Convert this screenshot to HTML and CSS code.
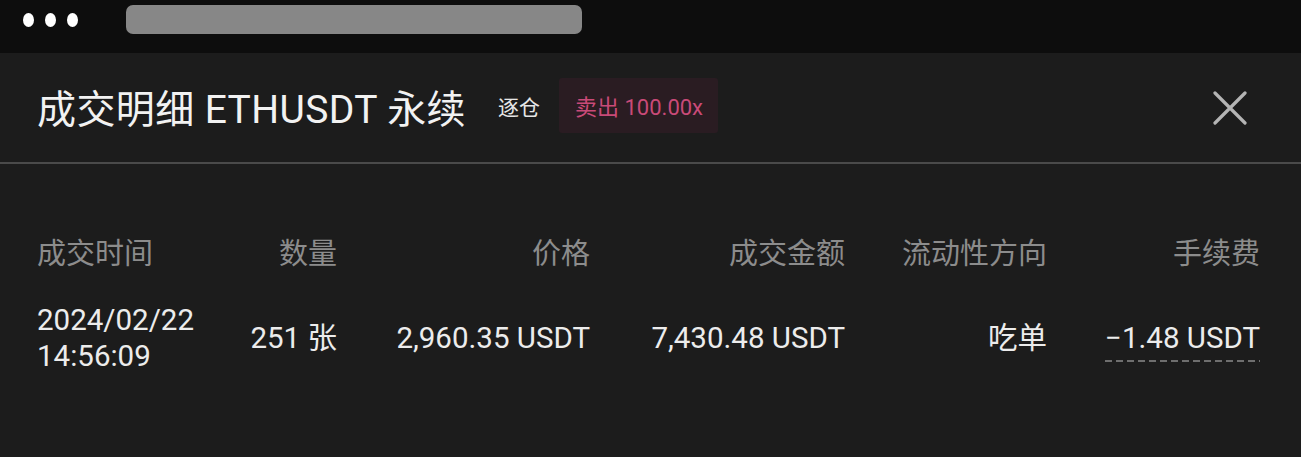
FILE: index.html
```html
<!DOCTYPE html>
<html lang="zh-CN">
<head>
    <meta charset="UTF-8">
    <meta name="viewport" content="width=device-width, initial-scale=1.0">
    <title>成交明细</title>
    <link rel="stylesheet" href="styles.css">
</head>
<body>
    <div class="top-bar">
        <div class="dots">
            <span class="dot"></span>
            <span class="dot"></span>
            <span class="dot"></span>
        </div>
        <div class="address-bar"></div>
    </div>

    <div class="panel">
        <div class="panel-header">
            <h1 class="title">成交明细 ETHUSDT 永续</h1>
            <span class="margin-mode">逐仓</span>
            <span class="side-badge">卖出 100.00x</span>
            <button class="close-btn" aria-label="关闭">
                <svg width="34" height="34" viewBox="0 0 34 34">
                    <path d="M2 2 L32 32 M32 2 L2 32" stroke="#b4b4b4" stroke-width="3.2" stroke-linecap="round" fill="none"/>
                </svg>
            </button>
        </div>

        <div class="trade-table">
            <div class="row head">
                <div class="cell left">成交时间</div>
                <div class="cell">数量</div>
                <div class="cell">价格</div>
                <div class="cell">成交金额</div>
                <div class="cell">流动性方向</div>
                <div class="cell">手续费</div>
            </div>
            <div class="row data">
                <div class="cell left">2024/02/22<br>14:56:09</div>
                <div class="cell">251 张</div>
                <div class="cell">2,960.35 USDT</div>
                <div class="cell">7,430.48 USDT</div>
                <div class="cell">吃单</div>
                <div class="cell"><span class="fee">−1.48 USDT</span></div>
            </div>
        </div>
    </div>
</body>
</html>
```

FILE: styles.css
```css
body {
    margin: 0;
    padding: 0;
    background: #1c1c1c;
    font-family: Roboto, "Noto Sans CJK SC", sans-serif;
    color: #ececec;
}
.top-bar {
    height: 53px;
    background: #0d0d0d;
    display: flex;
    align-items: flex-start;
    padding-left: 23px;
}
.dots {
    display: flex;
    gap: 11px;
    margin-top: 13px;
}
.dot {
    width: 11px;
    height: 14px;
    border-radius: 50%;
    background: #fff;
}
.address-bar {
    margin-left: 48px;
    margin-top: 5px;
    width: 456px;
    height: 29px;
    border-radius: 7px;
    background: #878787;
}
.panel {
    background: #1c1c1c;
}
.panel-header {
    height: 105px;
    display: flex;
    align-items: center;
    padding: 0 54px 4px 37px;
    border-bottom: 2px solid #4a4a4a;
}
.title {
    margin: 0;
    font-size: 39px;
    font-weight: 400;
    letter-spacing: 0.4px;
    color: #f2f2f2;
}
.margin-mode {
    margin-left: 32px;
    font-size: 21px;
    color: #e6e6e6;
}
.side-badge {
    margin-left: 19px;
    padding: 11px 15px 12px 16px;
    background: #2a1c22;
    color: #c94a78;
    font-size: 22px;
    border-radius: 3px;
}
.close-btn {
    margin-left: auto;
    margin-top: 4px;
    background: none;
    border: none;
    padding: 0;
    width: 34px;
    height: 34px;
    cursor: pointer;
}
.trade-table {
    padding: 72px 41px 0 37px;
}
.row {
    display: grid;
    grid-template-columns: 163px 137px 253px 255px 202px 213px;
}
.cell {
    text-align: right;
    white-space: nowrap;
}
.cell.left {
    text-align: left;
}
.row.head {
    font-size: 29px;
    line-height: 36px;
    color: #8c8c8c;
}
.row.data {
    margin-top: 30px;
    font-size: 29.5px;
    line-height: 36px;
    color: #ececec;
    align-items: center;
}
.fee {
    display: inline-block;
    line-height: 32px;
    padding-bottom: 8px;
    margin-bottom: -8px;
    background-image: linear-gradient(to right, #6e6e6e 65%, transparent 0);
    background-size: 11px 2px;
    background-repeat: repeat-x;
    background-position: left bottom;
}
```
